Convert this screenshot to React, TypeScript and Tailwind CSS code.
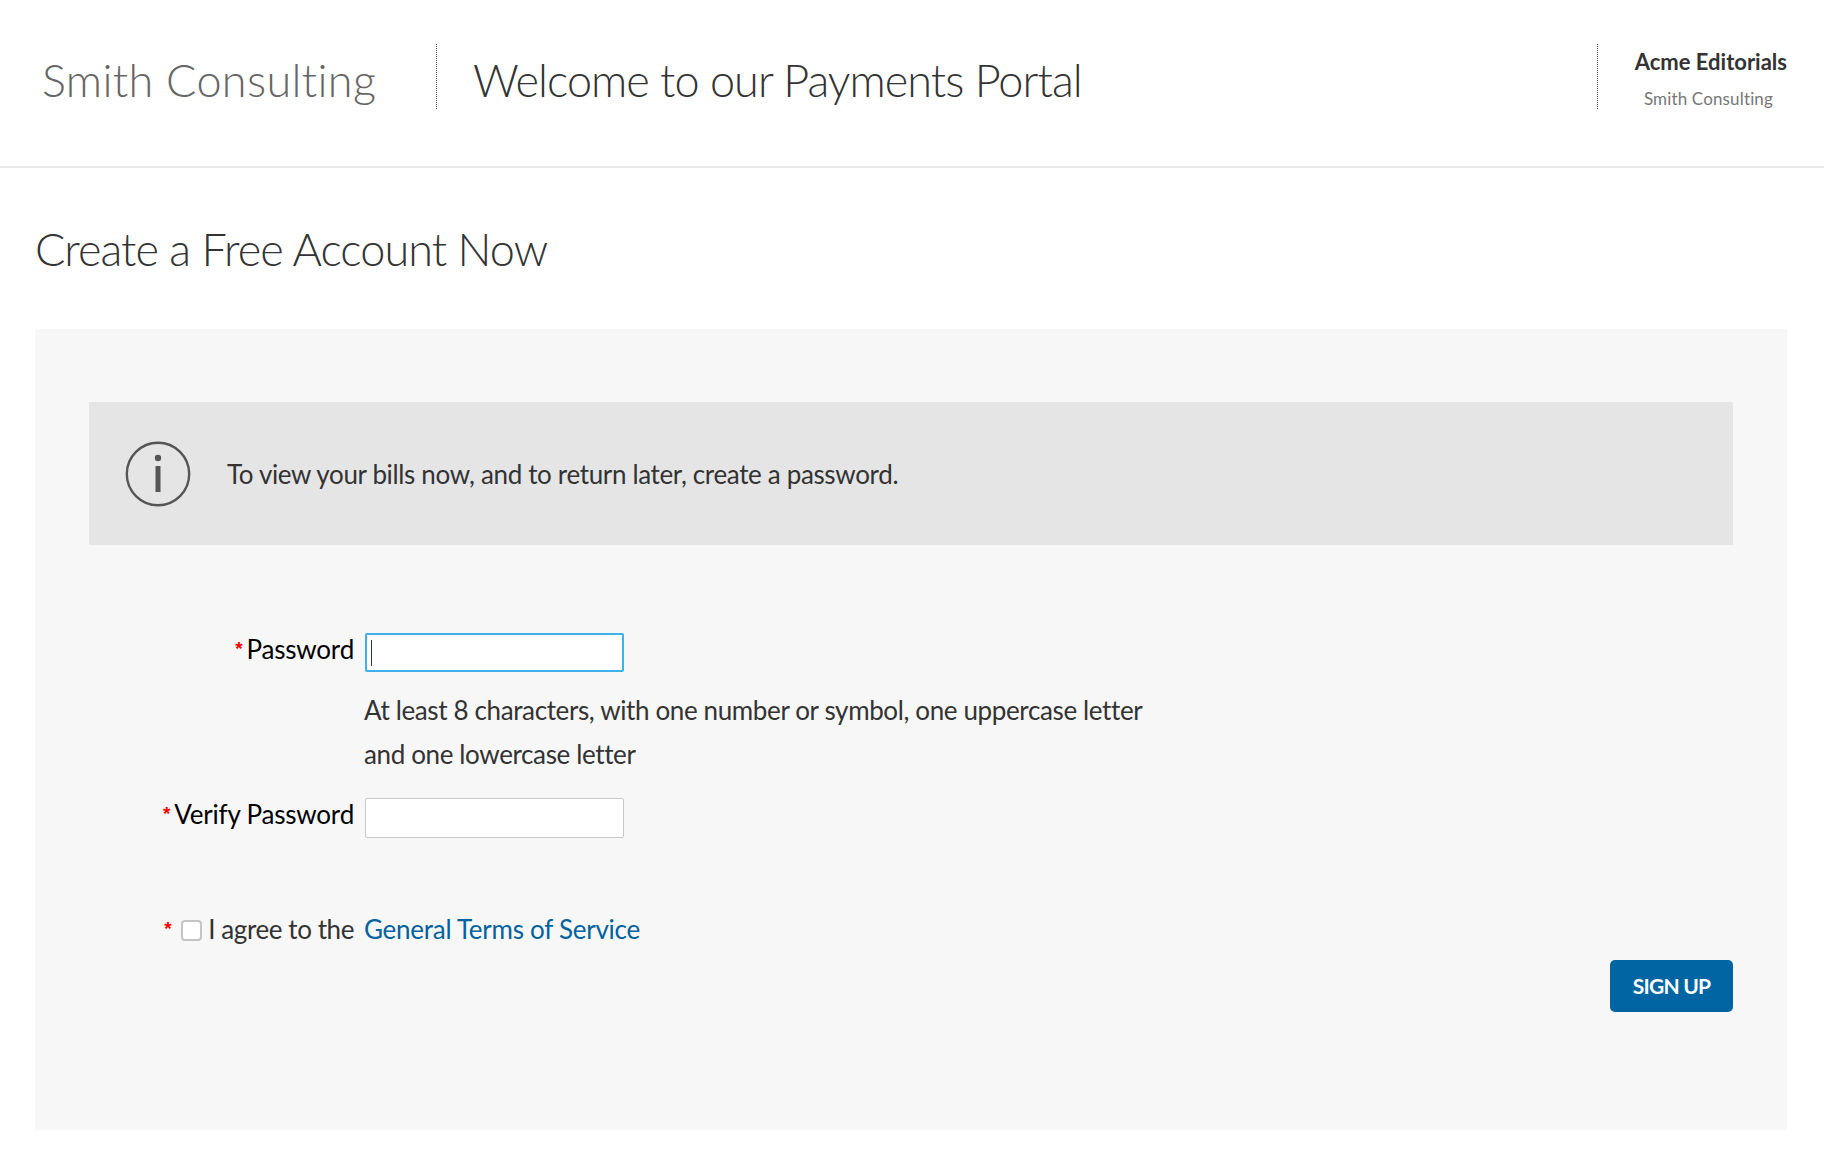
export default function App() {
  const star = "mr-[4px] font-['Liberation_Sans',sans-serif] text-[19px] font-bold leading-[20px] text-[#f00]";
  return (
    <div className="min-h-[1150px] bg-white font-['Lato',sans-serif] text-[#333]">
      <header className="flex h-[168px] items-start border-b-2 border-[#e8e8e8] pl-[42px] pt-[44px]">
        <div className="flex h-[65px] w-[395px] items-center border-r border-dotted border-[#555]">
          <span className="pt-[8px] text-[45px] font-light leading-none tracking-[0.33px] text-[#666]">Smith Consulting</span>
        </div>
        <h1 className="flex h-[65px] items-center pl-[36px] pt-[8px] text-[45px] font-light leading-none tracking-[-0.95px] text-[#333]">Welcome to our Payments Portal</h1>
        <div className="ml-auto mr-[37px] flex h-[65px] w-[190px] flex-col items-end border-l border-dotted border-[#555]">
          <div className="mt-[4px] text-[22px] font-bold leading-[28px] text-[#333]">Acme Editorials</div>
          <div className="mr-[14px] mt-[12px] text-[17px] leading-[22px] tracking-[0.15px] text-[#777]">Smith Consulting</div>
        </div>
      </header>
      <main className="pl-[35px] pr-[37px]">
        <h2 className="pb-[51px] pt-[52px] text-[45px] font-light leading-[58px] tracking-[-0.93px] text-[#333]">Create a Free Account Now</h2>
        <section className="h-[801px] bg-[#f7f7f7] px-[54px] pt-[73px]">
          <div className="flex h-[143px] items-center bg-[#e5e5e5] pl-[36px]">
            <svg width="66" height="66" viewBox="0 0 66 66" className="shrink-0">
              <circle cx="33" cy="33" r="31.2" fill="none" stroke="#555" strokeWidth="2.4" />
              <circle cx="33" cy="17" r="3.2" fill="#555" />
              <rect x="30.5" y="25" width="5" height="26" fill="#555" />
            </svg>
            <p className="ml-[36px] text-[26px] leading-[32px] tracking-[-0.35px] text-[#333]">To view your bills now, and to return later, create a password.</p>
          </div>
          <div className="flex items-start pl-[10px] pt-[88px]">
            <div className="flex w-[255px] shrink-0 items-center justify-end text-[26px] leading-[32px] tracking-[-0.2px] text-black">
              <span className={star}>*</span>Password
            </div>
            <div className="ml-[11px] flex h-[39px] w-[259px] items-center rounded-[2px] border-2 border-[#3fb1ea] bg-white pl-[4px]">
              <div className="h-[26px] w-px bg-[#333]" />
            </div>
          </div>
          <div className="ml-[275px] pt-[16px] text-[26px] leading-[44px] tracking-[-0.37px] text-[#333]">
            <p>At least 8 characters, with one number or symbol, one uppercase letter</p>
            <p>and one lowercase letter</p>
          </div>
          <div className="flex items-start pl-[10px] pt-[22px]">
            <div className="flex w-[255px] shrink-0 items-center justify-end text-[26px] leading-[32px] tracking-[-0.2px] text-black">
              <span className={star}>*</span>Verify Password
            </div>
            <div className="ml-[11px] h-[40px] w-[259px] rounded-[2px] border border-[#c9c9c9] bg-white" />
          </div>
          <div className="flex items-center pl-[10px] pt-[75px]">
            <div className="flex w-[255px] shrink-0 items-center justify-end whitespace-nowrap text-[26px] leading-[32px] tracking-[-0.42px]">
              <span className={star}>*</span>
              <span className="ml-[6px] mt-[3px] h-[21px] w-[21px] rounded-[4px] border-2 border-[#c4c4c4] bg-white" />
              <span className="ml-[6px] text-[#333]">I agree to the</span>
            </div>
            <a className="ml-[10px] whitespace-nowrap text-[26px] leading-[32px] tracking-[-0.26px] text-[#00629f]">General Terms of Service</a>
          </div>
          <div className="flex justify-end pt-[15px]">
            <button className="h-[52px] w-[123px] rounded-[5px] bg-[#0065a2] text-[21px] font-bold tracking-[-0.8px] text-white">SIGN UP</button>
          </div>
        </section>
      </main>
    </div>
  );
}
